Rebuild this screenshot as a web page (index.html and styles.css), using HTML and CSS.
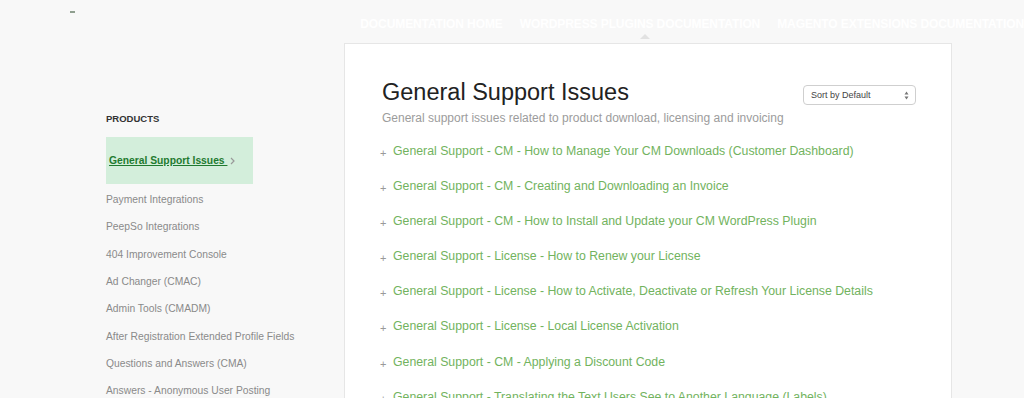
FILE: index.html
```html
<!DOCTYPE html>
<html lang="en">
<head>
  <meta charset="UTF-8" />
  <meta name="viewport" content="width=device-width, initial-scale=1.0"/>
  <title>General Support Issues - Documentation</title>
  <link rel="stylesheet" href="styles.css">
</head>
<body>
  <!-- Header -->
  <header class="header">
    <span class="logo"></span>
    <nav class="top-nav">
      <a href="#">Documentation Home</a>
      <a href="#" class="current">WordPress Plugins Documentation</a>
      <a href="#">Magento Extensions Documentation</a>
    </nav>
  </header>

  <div class="layout">
    <!-- Sidebar -->
    <aside class="sidebar">
      <div class="side-title">PRODUCTS</div>
      <div class="side-active">
        <a href="#">General Support Issues&nbsp;</a>
        <svg class="chev" width="5" height="8" viewBox="0 0 5 8"><path d="M1 1l3 3-3 3" fill="none" stroke="#999" stroke-width="1.2"/></svg>
      </div>
      <ul class="side-list">
        <li><a href="#">Payment Integrations</a></li>
        <li><a href="#">PeepSo Integrations</a></li>
        <li><a href="#">404 Improvement Console</a></li>
        <li><a href="#">Ad Changer (CMAC)</a></li>
        <li><a href="#">Admin Tools (CMADM)</a></li>
        <li><a href="#">After Registration Extended Profile Fields</a></li>
        <li><a href="#">Questions and Answers (CMA)</a></li>
        <li><a href="#">Answers - Anonymous User Posting</a></li>
      </ul>
    </aside>

    <!-- Main card -->
    <main class="card">
      <div class="card-head">
        <div class="head-text">
          <h1>General Support Issues</h1>
          <p class="subtitle">General support issues related to product download, licensing and invoicing</p>
        </div>
        <div class="sort">
          <span>Sort by Default</span>
          <svg width="5" height="9" viewBox="0 0 5 9"><path d="M2.5 0.5L4.5 3.5H0.5Z M2.5 8.5L4.5 5.5H0.5Z" fill="#777"/></svg>
        </div>
      </div>
      <ul class="articles">
        <li><span class="plus">+</span><a href="#">General Support - CM - How to Manage Your CM Downloads (Customer Dashboard)</a></li>
        <li><span class="plus">+</span><a href="#">General Support - CM - Creating and Downloading an Invoice</a></li>
        <li><span class="plus">+</span><a href="#">General Support - CM - How to Install and Update your CM WordPress Plugin</a></li>
        <li><span class="plus">+</span><a href="#">General Support - License - How to Renew your License</a></li>
        <li><span class="plus">+</span><a href="#">General Support - License - How to Activate, Deactivate or Refresh Your License Details</a></li>
        <li><span class="plus">+</span><a href="#">General Support - License - Local License Activation</a></li>
        <li><span class="plus">+</span><a href="#">General Support - CM - Applying a Discount Code</a></li>
        <li><span class="plus">+</span><a href="#">General Support - Translating the Text Users See to Another Language (Labels)</a></li>
      </ul>
    </main>
  </div>
</body>
</html>
```

FILE: styles.css
```css
/* Global Reset */
* { margin: 0; padding: 0; box-sizing: border-box; }
html, body { height: 100%; }
body {
  font-family: "Liberation Sans", Arial, sans-serif;
  background: #f8f8f8;
  overflow: hidden;
}
a { text-decoration: none; }
ul { list-style: none; }

/* Header */
.header {
  display: flex;
  align-items: flex-start;
  height: 43px;
  white-space: nowrap;
}
.logo {
  display: block;
  width: 7px;
  height: 2px;
  margin: 11px 0 0 70px;
  background: #8f9f8f;
}
.top-nav {
  display: flex;
  gap: 17px;
  margin: 16px 0 0 285px;
}
.top-nav a {
  position: relative;
  color: #fff;
  font-size: 12px;
  font-weight: bold;
  text-transform: uppercase;
  letter-spacing: -0.1px;
  line-height: 16px;
}
.top-nav a.current::after {
  content: "";
  position: absolute;
  left: 50%;
  top: 18px;
  margin-left: 0;
  border-left: 5px solid transparent;
  border-right: 5px solid transparent;
  border-bottom: 5px solid #e2e2e2;
}

/* Layout */
.layout {
  display: flex;
  padding-left: 106px;
}

/* Sidebar */
.sidebar {
  width: 238px;
  padding-top: 69px;
}
.side-title {
  font-size: 9.5px;
  font-weight: bold;
  color: #333;
  line-height: 14px;
  margin-bottom: 11px;
}
.side-active {
  display: flex;
  align-items: center;
  width: 147px;
  height: 47px;
  padding-left: 3px;
  background: #d3eedb;
}
.side-active a {
  font-size: 10.3px;
  font-weight: bold;
  color: #1f7a30;
  text-decoration: underline;
}
.side-active .chev { margin-left: 3px; }
.side-list { padding-top: 2px; }
.side-list li {
  line-height: 27.35px;
  font-size: 10.3px;
}
.side-list a { color: #8a8a8a; }

/* Main card */
.card {
  width: 608px;
  min-height: 400px;
  background: #fff;
  border: 1px solid #e6e6e6;
  padding: 34px 35px 0 37px;
}
.card-head {
  display: flex;
  align-items: flex-start;
}
.head-text {
  flex: 1;
  min-width: 0;
  white-space: nowrap;
}
.card h1 {
  font-size: 23.5px;
  font-weight: normal;
  color: #222;
  line-height: 28px;
  margin-bottom: 3px;
}
.subtitle {
  font-size: 12px;
  color: #9c9c9c;
  line-height: 18px;
}
.sort {
  display: flex;
  flex-shrink: 0;
  align-items: center;
  justify-content: space-between;
  width: 113px;
  height: 20px;
  margin-top: 7px;
  padding: 0 6px 0 7px;
  border: 1px solid #cfcfcf;
  border-radius: 4px;
  font-size: 9px;
  color: #444;
}

/* Articles */
.articles { margin-top: 7px; }
.articles li {
  height: 35.1px;
  line-height: 35px;
  font-size: 12.3px;
  white-space: nowrap;
}
.plus {
  position: relative;
  top: 2px;
  display: inline-block;
  width: 13px;
  margin-left: -2px;
  color: #999;
  font-size: 11px;
}
.articles a { color: #72b35e; }
```
